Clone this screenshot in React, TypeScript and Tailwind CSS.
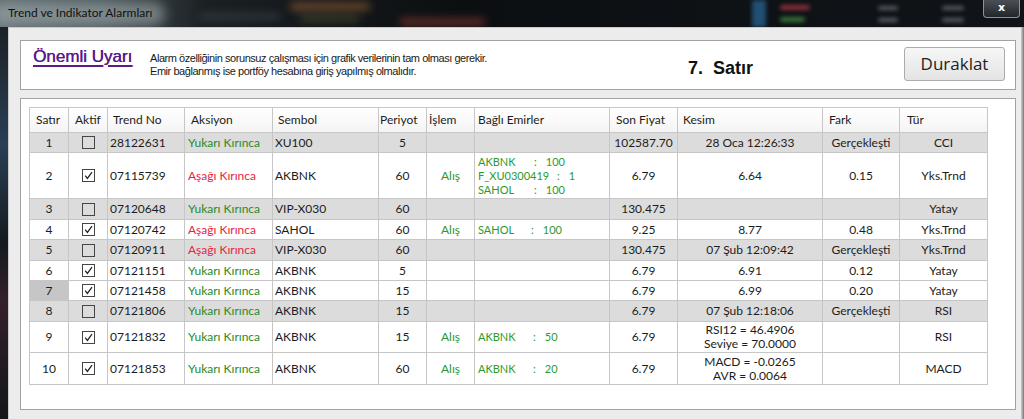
import { Fragment } from 'react'

type Row = {
  n: number
  active: boolean
  no: string
  up: boolean
  sym: string
  per: string
  islem?: string
  emir?: { name: string; qty: string; w: string }[]
  fiyat: string
  kesim: string[]
  fark: string
  tur: string
  h: string
}

const rows: Row[] = [
  { n: 1, active: false, no: '28122631', up: true, sym: 'XU100', per: '5', fiyat: '102587.70', kesim: ['28 Oca 12:26:33'], fark: 'Gerçekleşti', tur: 'CCI', h: 'h-[20px]' },
  {
    n: 2, active: true, no: '07115739', up: false, sym: 'AKBNK', per: '60', islem: 'Alış',
    emir: [
      { name: 'AKBNK', qty: '100', w: 'w-[56px]' },
      { name: 'F_XU0300419', qty: '1', w: 'w-[79px]' },
      { name: 'SAHOL', qty: '100', w: 'w-[56px]' },
    ],
    fiyat: '6.79', kesim: ['6.64'], fark: '0.15', tur: 'Yks.Trnd', h: 'h-[46px]',
  },
  { n: 3, active: false, no: '07120648', up: true, sym: 'VIP-X030', per: '60', fiyat: '130.475', kesim: [], fark: '', tur: 'Yatay', h: 'h-[21px]' },
  { n: 4, active: true, no: '07120742', up: false, sym: 'SAHOL', per: '60', islem: 'Alış', emir: [{ name: 'SAHOL', qty: '100', w: 'w-[53px]' }], fiyat: '9.25', kesim: ['8.77'], fark: '0.48', tur: 'Yks.Trnd', h: 'h-[20px]' },
  { n: 5, active: false, no: '07120911', up: false, sym: 'VIP-X030', per: '60', fiyat: '130.475', kesim: ['07 Şub 12:09:42'], fark: 'Gerçekleşti', tur: 'Yks.Trnd', h: 'h-[21px]' },
  { n: 6, active: true, no: '07121151', up: true, sym: 'AKBNK', per: '5', fiyat: '6.79', kesim: ['6.91'], fark: '0.12', tur: 'Yatay', h: 'h-[20px]' },
  { n: 7, active: true, no: '07121458', up: true, sym: 'AKBNK', per: '15', fiyat: '6.79', kesim: ['6.99'], fark: '0.20', tur: 'Yatay', h: 'h-[20px]' },
  { n: 8, active: false, no: '07121806', up: true, sym: 'AKBNK', per: '15', fiyat: '6.79', kesim: ['07 Şub 12:18:06'], fark: 'Gerçekleşti', tur: 'RSI', h: 'h-[21px]' },
  { n: 9, active: true, no: '07121832', up: true, sym: 'AKBNK', per: '15', islem: 'Alış', emir: [{ name: 'AKBNK', qty: '50', w: 'w-[55px]' }], fiyat: '6.79', kesim: ['RSI12 = 46.4906', 'Seviye = 70.0000'], fark: '', tur: 'RSI', h: 'h-[31px]' },
  { n: 10, active: true, no: '07121853', up: true, sym: 'AKBNK', per: '60', islem: 'Alış', emir: [{ name: 'AKBNK', qty: '20', w: 'w-[55px]' }], fiyat: '6.79', kesim: ['MACD = -0.0265', 'AVR = 0.0064'], fark: '', tur: 'MACD', h: 'h-[32px]' },
]

const headers = [
  { t: 'Satır', w: 'w-[39px] pl-[6px]' },
  { t: 'Aktif', w: 'w-[39px] pl-[6px]' },
  { t: 'Trend No', w: 'w-[77px] pl-[5px]' },
  { t: 'Aksiyon', w: 'w-[88px] pl-[6px]' },
  { t: 'Sembol', w: 'w-[106px] pl-[5px]' },
  { t: 'Periyot', w: 'w-[48px] pl-[1px]' },
  { t: 'İşlem', w: 'w-[48px] pl-[2px]' },
  { t: 'Bağlı Emirler', w: 'w-[135px] pl-[3px]' },
  { t: 'Son Fiyat', w: 'w-[68px] pl-[6px]' },
  { t: 'Kesim', w: 'w-[145px] pl-[5px]' },
  { t: 'Fark', w: 'w-[77px] pl-[6px]' },
  { t: 'Tür', w: 'w-[88px] pl-[7px]' },
]

function Check({ on }: { on: boolean }) {
  return (
    <span className="flex h-[13px] w-[13px] items-center justify-center border border-[#454545]">
      {on && (
        <svg width="9" height="9" viewBox="0 0 9 9">
          <path d="M1.2 4.6 L3.4 7.4 L8 1.2" stroke="#1c1c1c" strokeWidth="1.2" fill="none" />
        </svg>
      )}
    </span>
  )
}

const cell = 'flex shrink-0 items-center border-r border-[#c6c6c6]'

export default function App() {
  return (
    <div className="flex h-[419px] w-[1024px] flex-col overflow-hidden bg-[#0d1013] font-[Lato,sans-serif] text-[12px] text-[#1c1c1c]">
      {/* title bar */}
      <div className="relative h-[27px] shrink-0 overflow-hidden bg-[linear-gradient(90deg,#5d6a6e_0%,#4a5559_10%,#1b2023_20%,#0c0f12_45%,#101418_100%)]">
        <div className="absolute left-[-10px] top-[2px] h-[24px] w-[175px] rounded-full bg-[#a7b2b5]/55 blur-[6px]" />
        <div className="absolute left-[290px] top-[3px] h-[7px] w-[80px] rounded-full bg-[#b8703a]/60 blur-[4px]" />
        <div className="absolute left-[300px] top-[16px] h-[5px] w-[60px] rounded-full bg-[#6f7d3a]/50 blur-[4px]" />
        <div className="absolute left-[400px] top-[19px] h-[6px] w-[85px] rounded-full bg-[#b84b3a]/60 blur-[4px]" />
        <div className="absolute left-[200px] top-[14px] h-[5px] w-[80px] rounded-full bg-[#55606a]/50 blur-[4px]" />
        <div className="absolute left-[752px] top-0 h-[27px] w-[14px] bg-[#2f78b0]/60 blur-[2px]" />
        <div className="absolute left-[780px] top-[5px] h-[5px] w-[30px] rounded-full bg-[#c03a4a]/70 blur-[2px]" />
        <div className="absolute left-[780px] top-[17px] h-[5px] w-[25px] rounded-full bg-[#4a9a4a]/70 blur-[2px]" />
        <div className="absolute left-[878px] top-[6px] h-[4px] w-[20px] rounded-full bg-[#8a8f95]/60 blur-[2px]" />
        <div className="absolute left-[878px] top-[18px] h-[4px] w-[20px] rounded-full bg-[#8a8f95]/60 blur-[2px]" />
        <div className="absolute left-[942px] top-[6px] h-[4px] w-[22px] rounded-full bg-[#8a8f95]/60 blur-[2px]" />
        <div className="absolute left-[942px] top-[18px] h-[4px] w-[22px] rounded-full bg-[#8a8f95]/60 blur-[2px]" />
        <span className="relative ml-[8px] mt-[6px] block text-[12px] leading-[14px] text-[#101010]">Trend ve Indikator Alarmları</span>
        <div className="absolute right-[4px] top-0 flex h-[18px] w-[37px] items-center justify-center rounded-b-[4px] border border-t-0 border-[#8c939a] bg-[linear-gradient(#4a5057,#22262b)] font-['DejaVu_Sans',sans-serif] text-[11px] font-bold text-white">
          x
        </div>
      </div>

      <div className="flex flex-1">
        <div className="w-[8px] shrink-0 bg-[linear-gradient(#1b2126,#2a3f55_30%,#141a1f_55%,#35202a_70%,#12161a)]" />
        <div className="w-[1013px] shrink-0 border-l border-t border-[#c9c9c9] bg-[#ececec] pl-[11px] pt-[12px]">
          {/* warning panel */}
          <div className="flex h-[50px] w-[996px] items-start border border-[#a2a2a2] bg-white">
            <div className="w-[129px] shrink-0 pl-[12px] pt-[7px]">
              <span className="font-['Liberation_Sans',Arial,sans-serif] text-[17px] leading-[17px] text-[#5a1a8c] underline decoration-[1.5px] underline-offset-[3px] [text-shadow:0.4px_0_0_#5a1a8c]">
                Önemli Uyarı
              </span>
            </div>
            <div className="w-[538px] shrink-0 pt-[11px] font-['Liberation_Sans',Arial,sans-serif] text-[11px] leading-[13px] tracking-[-0.45px] text-[#1a1a1a]">
              <div>Alarm özelliğinin sorunsuz çalışması için grafik verilerinin tam olması gerekir.</div>
              <div>Emir bağlanmış ise portföy hesabına giriş yapılmış olmalıdır.</div>
            </div>
            <div className="whitespace-pre pt-[18px] font-['Liberation_Sans',Arial,sans-serif] text-[18px] font-bold leading-[18px] text-[#111]">
              7.  Satır
            </div>
            <button
              type="button"
              className="ml-auto mr-[10px] mt-[6px] flex h-[34px] w-[101px] items-center justify-center rounded-[3px] border border-[#acacac] bg-[linear-gradient(#f6f6f6,#e4e4e4)] font-['Open_Sans',sans-serif] text-[17px] text-[#1e1e1e]"
            >
              Duraklat
            </button>
          </div>

          {/* alarm table */}
          <div className="mt-[8px] h-[312px] w-[996px] border border-[#a2a2a2] bg-white pl-[8px] pt-[8px]">
            <div className="w-[959px] border-l border-t border-[#c6c6c6]">
              <div className="flex h-[25px] border-b border-[#c6c6c6] bg-[linear-gradient(#ffffff,#f4f4f4)]">
                {headers.map((h) => (
                  <div key={h.t} className={`${cell} ${h.w} whitespace-nowrap`}>
                    {h.t}
                  </div>
                ))}
              </div>
              {rows.map((r) => {
                const grey = !r.active
                return (
                  <div key={r.n} className={`flex border-b border-[#c6c6c6] ${r.h} ${grey ? 'bg-[#dcdcdc]' : 'bg-white'}`}>
                    <div className={`${cell} w-[39px] justify-center ${r.n === 7 ? 'bg-[#c6c6c6]' : ''}`}>{r.n}</div>
                    <div className={`${cell} w-[39px] justify-center`}>
                      <Check on={r.active} />
                    </div>
                    <div className={`${cell} w-[77px] pl-[2px]`}>{r.no}</div>
                    <div className={`${cell} w-[88px] pl-[3px] ${r.up ? 'text-[#2a8a2a]' : 'text-[#e8243c]'}`}>
                      {r.up ? 'Yukarı Kırınca' : 'Aşağı Kırınca'}
                    </div>
                    <div className={`${cell} w-[106px] pl-[2px]`}>{r.sym}</div>
                    <div className={`${cell} w-[48px] justify-center`}>{r.per}</div>
                    <div className={`${cell} w-[48px] justify-center text-[#2f962f]`}>{r.islem}</div>
                    <div className={`${cell} w-[135px] flex-col !items-start justify-center pl-[3px] text-[11px] leading-[14px] text-[#2e9a2e]`}>
                      {r.emir?.map((e) => (
                        <div key={e.name} className="flex whitespace-pre">
                          <span className={`${e.w} inline-block`}>{e.name}</span>
                          <span>:</span>
                          <span className="ml-[9px]">{e.qty}</span>
                        </div>
                      ))}
                    </div>
                    <div className={`${cell} w-[68px] justify-center`}>{r.fiyat}</div>
                    <div className={`${cell} w-[145px] flex-col justify-center text-center leading-[14px]`}>
                      {r.kesim.map((k) => (
                        <Fragment key={k}>
                          <div>{k}</div>
                        </Fragment>
                      ))}
                    </div>
                    <div className={`${cell} w-[77px] justify-center`}>{r.fark}</div>
                    <div className={`${cell} w-[88px] justify-center`}>{r.tur}</div>
                  </div>
                )
              })}
            </div>
          </div>
        </div>
        <div className="flex-1 bg-[linear-gradient(90deg,#cfcfcf,#6f7880)]" />
      </div>
    </div>
  )
}
